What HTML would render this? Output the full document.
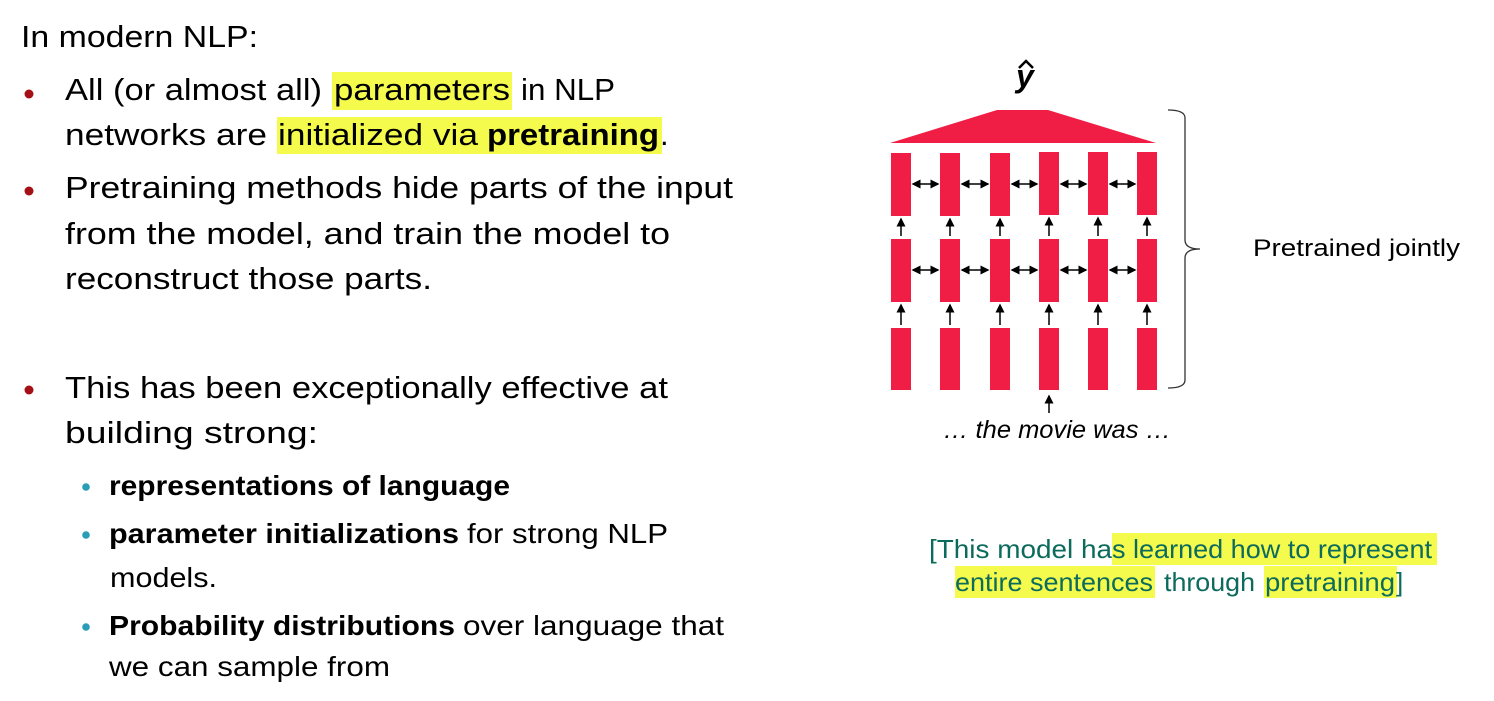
<!DOCTYPE html>
<html><head><meta charset="utf-8"><style>
body{margin:0;width:1494px;height:701px;background:#fff;position:relative;overflow:hidden;font-family:"Liberation Sans",sans-serif;color:#000}
svg text{font-family:"Liberation Sans",sans-serif}
</style></head><body>
<svg style="position:absolute;left:0;top:0" width="1494" height="701">
<defs><marker id="a" markerWidth="6" markerHeight="6" refX="5" refY="3" orient="auto"><path d="M0,0L6,3L0,6z" fill="#000"/></marker>
<marker id="s" markerWidth="6" markerHeight="6" refX="1" refY="3" orient="auto"><path d="M6,0L0,3L6,6z" fill="#000"/></marker></defs>
<g fill="#f4fb4c">
<rect x="332" y="72" width="180" height="38"/>
<rect x="277" y="117" width="385" height="37"/>
<rect x="1112" y="533" width="325" height="32"/>
<rect x="955" y="566" width="200" height="32"/>
<rect x="1264" y="566" width="133" height="32"/>
</g>
<g font-size="31">
<text x="21" y="47" textLength="237" lengthAdjust="spacingAndGlyphs">In modern NLP:</text>
<text x="65" y="100" textLength="257" lengthAdjust="spacingAndGlyphs">All (or almost all)</text>
<text x="334" y="100" textLength="176" lengthAdjust="spacingAndGlyphs">parameters</text>
<text x="521" y="100" textLength="94" lengthAdjust="spacingAndGlyphs">in NLP</text>
<text x="65" y="145" textLength="202" lengthAdjust="spacingAndGlyphs">networks are</text>
<text x="278" y="145" textLength="200" lengthAdjust="spacingAndGlyphs">initialized via</text>
<text x="487" y="145" textLength="172" lengthAdjust="spacingAndGlyphs" font-weight="bold">pretraining</text>
<text x="660" y="145">.</text>
<text x="65" y="198" textLength="668" lengthAdjust="spacingAndGlyphs">Pretraining methods hide parts of the input</text>
<text x="65" y="244" textLength="605" lengthAdjust="spacingAndGlyphs">from the model, and train the model to</text>
<text x="65" y="289" textLength="367" lengthAdjust="spacingAndGlyphs">reconstruct those parts.</text>
<text x="65" y="398" textLength="603" lengthAdjust="spacingAndGlyphs">This has been exceptionally effective at</text>
<text x="65" y="443" textLength="253" lengthAdjust="spacingAndGlyphs">building strong:</text>
</g>
<g font-size="28">
<text x="109" y="495" textLength="401" lengthAdjust="spacingAndGlyphs" font-weight="bold">representations of language</text>
<text x="109" y="543" textLength="350" lengthAdjust="spacingAndGlyphs" font-weight="bold">parameter initializations</text>
<text x="467" y="543" textLength="201" lengthAdjust="spacingAndGlyphs">for strong NLP</text>
<text x="110" y="587" textLength="107" lengthAdjust="spacingAndGlyphs">models.</text>
<text x="109" y="635" textLength="346" lengthAdjust="spacingAndGlyphs" font-weight="bold">Probability distributions</text>
<text x="463" y="635" textLength="261" lengthAdjust="spacingAndGlyphs">over language that</text>
<text x="109" y="676" textLength="281" lengthAdjust="spacingAndGlyphs">we can sample from</text>
</g>
<g fill="#a50f16"><circle cx="29" cy="94" r="4.5"/><circle cx="29" cy="191" r="4.5"/><circle cx="29" cy="390" r="4.5"/></g>
<g fill="#2a9cb8"><circle cx="86" cy="487" r="3.8"/><circle cx="86" cy="535" r="3.8"/><circle cx="86" cy="627" r="3.8"/></g>

<polygon points="890,143 997,110 1048,110 1156,143" fill="#f01e44"/>
<g fill="#f01e44">
<rect x="891" y="153" width="20" height="63"/><rect x="940" y="153" width="20" height="63"/><rect x="990" y="153" width="20" height="63"/><rect x="1039" y="152" width="20" height="63"/><rect x="1088" y="152" width="20" height="63"/><rect x="1137" y="152" width="20" height="63"/>
<rect x="891" y="239" width="20" height="63"/><rect x="940" y="239" width="20" height="63"/><rect x="990" y="239" width="20" height="63"/><rect x="1039" y="239" width="20" height="63"/><rect x="1088" y="239" width="20" height="63"/><rect x="1137" y="239" width="20" height="63"/>
<rect x="891" y="328" width="20" height="62"/><rect x="940" y="328" width="20" height="62"/><rect x="990" y="328" width="20" height="62"/><rect x="1039" y="328" width="20" height="62"/><rect x="1088" y="328" width="20" height="62"/><rect x="1137" y="328" width="20" height="62"/>
</g>
<g stroke="#000" stroke-width="1.5" marker-end="url(#a)" marker-start="url(#s)">
<line x1="913" y1="184" x2="938" y2="184"/><line x1="962" y1="184" x2="988" y2="184"/><line x1="1012" y1="184" x2="1037" y2="184"/><line x1="1061" y1="184" x2="1086" y2="184"/><line x1="1110" y1="184" x2="1135" y2="184"/>
<line x1="913" y1="270" x2="938" y2="270"/><line x1="962" y1="270" x2="988" y2="270"/><line x1="1012" y1="270" x2="1037" y2="270"/><line x1="1061" y1="270" x2="1086" y2="270"/><line x1="1110" y1="270" x2="1135" y2="270"/>
</g>
<g stroke="#000" stroke-width="1.5" marker-end="url(#a)">
<line x1="901" y1="236" x2="901" y2="219"/><line x1="950" y1="236" x2="950" y2="219"/><line x1="1000" y1="236" x2="1000" y2="219"/><line x1="1049" y1="236" x2="1049" y2="218"/><line x1="1098" y1="236" x2="1098" y2="218"/><line x1="1147" y1="236" x2="1147" y2="218"/>
<line x1="901" y1="325" x2="901" y2="305"/><line x1="950" y1="325" x2="950" y2="305"/><line x1="1000" y1="325" x2="1000" y2="305"/><line x1="1049" y1="325" x2="1049" y2="305"/><line x1="1098" y1="325" x2="1098" y2="305"/><line x1="1147" y1="325" x2="1147" y2="305"/>
<line x1="1049" y1="413" x2="1049" y2="396"/>
</g>
<path d="M1168,110 Q1185,110 1185,118 L1185,240 Q1185,249 1200,249 Q1185,249 1185,258 L1185,380 Q1185,388 1168,388" fill="none" stroke="#333" stroke-width="1.3"/>
<text x="1016" y="87" font-family="Liberation Serif,serif" font-style="italic" font-weight="bold" font-size="32">y</text>
<path d="M1019,68 L1026,61 L1033,68" fill="none" stroke="#000" stroke-width="2.5"/>
<text x="943" y="438" font-style="italic" font-size="25" textLength="228" lengthAdjust="spacingAndGlyphs">… the movie was …</text>
<text x="1253" y="256" font-size="24" textLength="207" lengthAdjust="spacingAndGlyphs">Pretrained jointly</text>
<g fill="#0c6b5c" font-size="26">
<text x="929" y="558" textLength="183" lengthAdjust="spacingAndGlyphs">[This model ha</text>
<text x="1112" y="558" textLength="320" lengthAdjust="spacingAndGlyphs">s learned how to represent</text>
<text x="955" y="591" textLength="198" lengthAdjust="spacingAndGlyphs">entire sentences</text>
<text x="1164" y="591" textLength="91" lengthAdjust="spacingAndGlyphs">through</text>
<text x="1265" y="591" textLength="130" lengthAdjust="spacingAndGlyphs">pretraining</text>
<text x="1396" y="591">]</text>
</g>
</svg>
</body></html>
